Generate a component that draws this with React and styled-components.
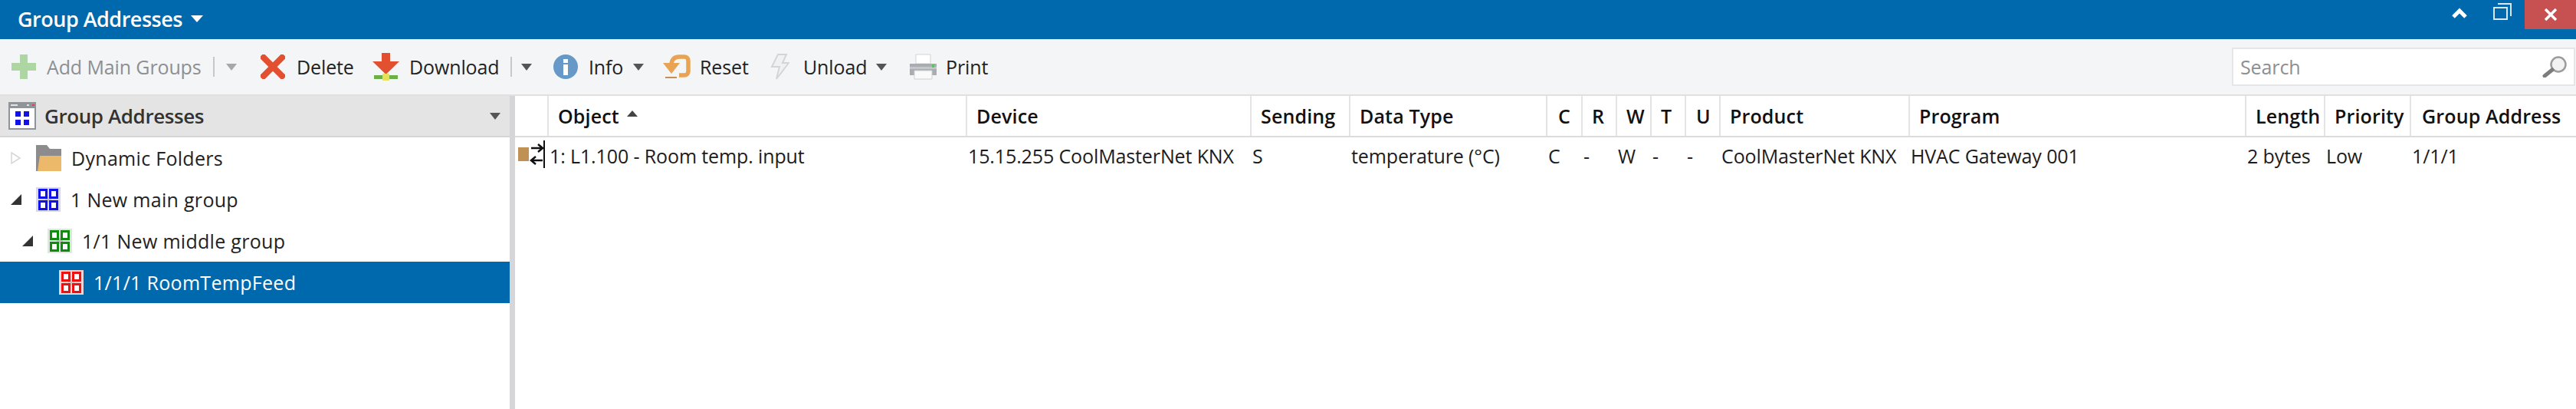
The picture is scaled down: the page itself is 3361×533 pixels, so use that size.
import React from "react";
import styled, { createGlobalStyle } from "styled-components";

const columns = "44px 546px 371px 129px 257px 46px 45px 45px 45px 45px 247px 439px 103px 112px 215px";

const GlobalStyle = createGlobalStyle`
  html, body {
    margin: 0;
    padding: 0;
    background: #ffffff;
  }
  * {
    box-sizing: border-box;
  }
`;

const Page = styled.div`
  width: 3361px;
  height: 533px;
  overflow: hidden;
  display: flex;
  flex-direction: column;
  font-family: "Open Sans", "Noto Sans", sans-serif;
  font-size: 25px;
  letter-spacing: -0.12px;
  color: #222222;
`;

const TitleBar = styled.div`
  height: 51px;
  flex: none;
  background: #0069ae;
  color: #ffffff;
  display: flex;
  align-items: flex-start;
`;

const Title = styled.div`
  margin-left: 23px;
  height: 49px;
  line-height: 49px;
  font-size: 27px;
  font-weight: 600;
  letter-spacing: -0.5px;
`;

const TitleArrow = styled.div`
  margin: 20px 0 0 11px;
  width: 0;
  height: 0;
  border-left: 8px solid transparent;
  border-right: 8px solid transparent;
  border-top: 9px solid #ffffff;
`;

const WindowControls = styled.div`
  margin-left: auto;
  display: flex;
  align-items: flex-start;
`;

const WindowIcon = styled.svg`
  display: block;
  margin-right: ${(p) => p.$right}px;
  margin-top: ${(p) => p.$top}px;
`;

const CloseButton = styled.div`
  width: 67px;
  height: 38px;
  background: #c75050;
  display: flex;
  align-items: center;
  justify-content: center;
`;

const Toolbar = styled.div`
  height: 74px;
  flex: none;
  background: #f4f5f7;
  border-bottom: 2px solid #e0e0e0;
  padding-left: 15px;
  display: flex;
  align-items: center;
`;

const ToolButton = styled.div`
  width: ${(p) => p.$width}px;
  flex: none;
  display: flex;
  align-items: center;
  white-space: nowrap;
  color: ${(p) => (p.$disabled ? "#8c8f93" : "#222222")};
`;

const ToolLabel = styled.span`
  margin-left: ${(p) => p.$gap}px;
  line-height: 32px;
`;

const ToolIcon = styled.svg`
  display: block;
  flex: none;
`;

const Separator = styled.div`
  width: 2px;
  height: 26px;
  flex: none;
  background: #c6c8ca;
`;

const MenuArrow = styled.div`
  flex: none;
  width: 0;
  height: 0;
  margin-left: ${(p) => p.$left || 0}px;
  border-left: 7px solid transparent;
  border-right: 7px solid transparent;
  border-top: 9px solid ${(p) => (p.$light ? "#a5a7aa" : "#555555")};
`;

const SearchBox = styled.div`
  margin-left: auto;
  margin-right: 1px;
  width: 448px;
  height: 50px;
  background: #ffffff;
  border: 2px solid #e4e6e8;
  display: flex;
  align-items: center;
  padding: 0 8px 0 9px;
  justify-content: space-between;
  color: #8c8f93;
`;

const Body = styled.div`
  flex: 1;
  display: flex;
  min-height: 0;
`;

const TreePanel = styled.div`
  width: 665px;
  flex: none;
  display: flex;
  flex-direction: column;
`;

const PanelHeader = styled.div`
  height: 54px;
  flex: none;
  background: #e4e4e4;
  border-bottom: 2px solid #d4d4d4;
  display: flex;
  align-items: center;
  padding: 0 12px 0 11px;
  color: #333333;
  font-size: 26px;
  letter-spacing: -0.4px;
  font-weight: 600;
`;

const PanelTitle = styled.span`
  margin-left: 11px;
  flex: 1;
`;

const TreeRow = styled.div`
  height: 54px;
  display: flex;
  align-items: center;
  padding-left: ${(p) => 14 + p.$level * 15}px;
  background: ${(p) => (p.$selected ? "#0069ae" : "transparent")};
  color: ${(p) => (p.$selected ? "#ffffff" : "#222222")};
  letter-spacing: 0.3px;
`;

const Twisty = styled.svg`
  display: block;
  flex: none;
  width: 14px;
  height: 16px;
  margin-right: 19px;
`;

const TwistySpace = styled.div`
  width: 33px;
  flex: none;
`;

const TreeLabel = styled.span`
  margin-left: 13px;
  white-space: nowrap;
`;

const Splitter = styled.div`
  width: 7px;
  flex: none;
  background: #d6d6da;
`;

const Grid = styled.div`
  flex: 1;
  min-width: 0;
`;

const HeaderRow = styled.div`
  display: grid;
  grid-template-columns: ${columns};
  height: 54px;
  border-bottom: 2px solid #dcdcdc;
`;

const HeaderCell = styled.div`
  border-right: 2px solid #e4e4e4;
  padding-left: ${(p) => p.$pad ?? 12}px;
  display: flex;
  align-items: center;
  font-weight: 600;
  letter-spacing: 0.15px;
  color: #111111;
  white-space: nowrap;
  &:last-child {
    border-right: none;
  }
`;

const SortArrow = styled.div`
  margin: 0 0 6px 10px;
  width: 0;
  height: 0;
  border-left: 7px solid transparent;
  border-right: 7px solid transparent;
  border-bottom: 8px solid #444444;
`;

const DataRow = styled.div`
  display: grid;
  grid-template-columns: ${columns};
  height: 48px;
`;

const DataCell = styled.div`
  padding-left: 1px;
  display: flex;
  align-items: center;
  white-space: nowrap;
  overflow: hidden;
  color: #1c1c1c;
`;

const GutterCell = styled.div`
  display: flex;
  align-items: center;
  padding: 0 0 4px 4px;
`;

const Plus = () => (
  <ToolIcon width="32" height="32" viewBox="0 0 32 32">
    <path d="M11 0h10v11h11v10H21v11H11V21H0V11h11z" fill="#aed6a3" />
  </ToolIcon>
);

const Cross = () => (
  <ToolIcon width="32" height="32" viewBox="0 0 32 32">
    <path d="M4 4l24 24M28 4L4 28" stroke="#e25030" strokeWidth="8" strokeLinecap="square" />
  </ToolIcon>
);

const DownloadIcon = () => (
  <ToolIcon width="35" height="36" viewBox="0 0 35 36">
    <path d="M12 0h11v11h12L17.5 28 0 11h12z" fill="#e25030" />
    <path d="M2 29h31v5H2z" fill="#6cb04a" />
    <path d="M13 27h9v9h-9z" fill="#e8e05a" />
  </ToolIcon>
);

const InfoIcon = () => (
  <ToolIcon width="32" height="32" viewBox="0 0 32 32">
    <circle cx="16" cy="16" r="16" fill="#6699c8" />
    <path d="M13 6h6v5h-6zM13 13h6v14h-6z" fill="#ffffff" />
  </ToolIcon>
);

const ResetIcon = () => (
  <ToolIcon width="36" height="32" viewBox="0 0 36 32">
    <path d="M11 12C12 6 15 3 21 3h7c3 0 5 2 5 5v14c0 3-2 5-5 5h-7" fill="none" stroke="#e8a454" strokeWidth="5.5" />
    <path d="M0 11h22L11 25z" fill="#e8a454" />
    <path d="M3 29h15v2H3z" fill="#c79050" />
  </ToolIcon>
);

const UnloadIcon = () => (
  <ToolIcon width="25" height="34" viewBox="0 0 25 34">
    <path d="M10 1h11l-5 11h8L8 33l4-16H2z" fill="#f0f1f2" stroke="#d4d5d7" strokeWidth="2" />
  </ToolIcon>
);

const PrintIcon = () => (
  <ToolIcon width="35" height="34" viewBox="0 0 35 34">
    <path d="M8 1h19v12H8z" fill="#ffffff" stroke="#d2d3d5" />
    <path d="M0 13h35v15H0z" fill="#a9adb1" />
    <path d="M0 17h35v3H0z" fill="#c4c7ca" />
    <path d="M29 14h3v4h-3z" fill="#5ec267" />
    <path d="M6 22h23v11H6z" fill="#fafafa" stroke="#cfd0d2" />
  </ToolIcon>
);

const SearchIcon = () => (
  <ToolIcon width="33" height="28" viewBox="0 0 33 28">
    <circle cx="21" cy="11" r="9.5" fill="#f2f2f2" stroke="#9c9c9c" strokeWidth="2.5" />
    <path d="M13 18L3 26" stroke="#7d7d7d" strokeWidth="5" strokeLinecap="round" />
  </ToolIcon>
);

const PanelIcon = () => (
  <ToolIcon width="36" height="36" viewBox="0 0 36 36">
    <path d="M0 0h36v36H0z" fill="#8f949b" />
    <path d="M2 8h32v26H2z" fill="#ffffff" />
    <path d="M3 3h9v2H3zM24 3h3v2h-3z" fill="#e4e4e4" />
    <path d="M31 3h3v2h-3z" fill="#d04a4a" />
    <path d="M9 12h7v7H9zM20 12h7v7h-7zM9 23h7v7H9zM20 23h7v7h-7z" fill="#1212e8" />
  </ToolIcon>
);

const GroupIcon = ({ color, fill }) => (
  <ToolIcon width="32" height="32" viewBox="0 0 32 32">
    <path d="M0 0h32v32H0z" fill={fill} />
    <path d="M14 12h4v8h-4zM12 14h8v4h-8z" fill="#c4c4c4" />
    <path
      d="M4.5 3.5h9v10h-9zM18.5 3.5h9v10h-9zM4.5 18.5h9v10h-9zM18.5 18.5h9v10h-9z"
      fill="#ffffff"
      stroke={color}
      strokeWidth="3"
    />
  </ToolIcon>
);

const FolderIcon = () => (
  <ToolIcon width="33" height="34" viewBox="0 0 33 34">
    <path d="M0 0h14l4 5h15v29H0z" fill="#8c8c8c" />
    <path d="M5 14h28v20H2z" fill="#ecb96a" />
  </ToolIcon>
);

const ConnectorIcon = () => (
  <ToolIcon width="36" height="36" viewBox="0 0 36 36">
    <path d="M0 9h14v18H0z" fill="#bf9155" />
    <path d="M17 10h14M26 5l6 5-6 5M32 26H18M23 21l-6 5 6 5" fill="none" stroke="#111111" strokeWidth="2.5" />
    <path d="M33 0h2v36h-2z" fill="#111111" />
  </ToolIcon>
);

const headers = [
  ["Object"], ["Device"], ["Sending"], ["Data Type"], ["C", 14], ["R", 12], ["W", 12], ["T", 12], ["U", 13],
  ["Product"], ["Program"], ["Length"], ["Priority"], ["Group Address", 14],
];

const cells = [
  "1: L1.100 - Room temp. input", "15.15.255 CoolMasterNet KNX", "S", "temperature (°C)", "C", "-", "W", "-", "-",
  "CoolMasterNet KNX", "HVAC Gateway 001", "2 bytes", "Low", "1/1/1",
];

const App = () => (
  <Page>
    <GlobalStyle />
    <TitleBar>
      <Title>Group Addresses</Title>
      <TitleArrow />
      <WindowControls>
        <WindowIcon $right={34} $top={10} width="20" height="15" viewBox="0 0 20 15">
          <path d="M2 12l8-8 8 8" fill="none" stroke="#ffffff" strokeWidth="5" />
        </WindowIcon>
        <WindowIcon $right={17} $top={4} width="24" height="22" viewBox="0 0 24 22">
          <path d="M6 1h17v16M1 6h17v15H1z" fill="none" stroke="#d7e8f4" strokeWidth="2" />
        </WindowIcon>
        <CloseButton>
          <svg width="18" height="16" viewBox="0 0 18 16">
            <path d="M2 1l14 14M16 1L2 15" stroke="#ffffff" strokeWidth="3.5" />
          </svg>
        </CloseButton>
      </WindowControls>
    </TitleBar>

    <Toolbar>
      <ToolButton $width={263} $disabled>
        <Plus />
        <ToolLabel $gap={14}>Add Main Groups</ToolLabel>
      </ToolButton>
      <ToolButton $width={62}>
        <Separator />
        <MenuArrow $left={15} $light />
      </ToolButton>
      <ToolButton $width={146}>
        <Cross />
        <ToolLabel $gap={15}>Delete</ToolLabel>
      </ToolButton>
      <ToolButton $width={180}>
        <DownloadIcon />
        <ToolLabel $gap={13}>Download</ToolLabel>
      </ToolButton>
      <ToolButton $width={56}>
        <Separator />
        <MenuArrow $left={12} />
      </ToolButton>
      <ToolButton $width={143}>
        <InfoIcon />
        <ToolLabel $gap={14}>Info</ToolLabel>
        <MenuArrow $left={13} />
      </ToolButton>
      <ToolButton $width={140}>
        <ResetIcon />
        <ToolLabel $gap={12}>Reset</ToolLabel>
      </ToolButton>
      <ToolButton $width={182}>
        <UnloadIcon />
        <ToolLabel $gap={18}>Unload</ToolLabel>
        <MenuArrow $left={12} />
      </ToolButton>
      <ToolButton $width={110}>
        <PrintIcon />
        <ToolLabel $gap={12}>Print</ToolLabel>
      </ToolButton>
      <SearchBox>
        <span>Search</span>
        <SearchIcon />
      </SearchBox>
    </Toolbar>

    <Body>
      <TreePanel>
        <PanelHeader>
          <PanelIcon />
          <PanelTitle>Group Addresses</PanelTitle>
          <MenuArrow />
        </PanelHeader>
        <TreeRow $level={0}>
          <Twisty viewBox="0 0 14 16">
            <path d="M1 1l11 7-11 7z" fill="#ffffff" stroke="#d6d6d6" strokeWidth="1.5" />
          </Twisty>
          <FolderIcon />
          <TreeLabel>Dynamic Folders</TreeLabel>
        </TreeRow>
        <TreeRow $level={0}>
          <Twisty viewBox="0 0 14 16">
            <path d="M14 1v14H0z" fill="#333333" />
          </Twisty>
          <GroupIcon color="#1212e8" fill="#d8d8ec" />
          <TreeLabel>1 New main group</TreeLabel>
        </TreeRow>
        <TreeRow $level={1}>
          <Twisty viewBox="0 0 14 16">
            <path d="M14 1v14H0z" fill="#333333" />
          </Twisty>
          <GroupIcon color="#128a12" fill="#dce8dc" />
          <TreeLabel>1/1 New middle group</TreeLabel>
        </TreeRow>
        <TreeRow $level={2} $selected>
          <TwistySpace />
          <GroupIcon color="#ee1111" fill="#e8d4d4" />
          <TreeLabel>1/1/1 RoomTempFeed</TreeLabel>
        </TreeRow>
      </TreePanel>
      <Splitter />
      <Grid>
        <HeaderRow>
          <HeaderCell $pad={0} />
          {headers.map(([label, pad]) => (
            <HeaderCell key={label} $pad={pad}>
              {label}
              {label === "Object" && <SortArrow />}
            </HeaderCell>
          ))}
        </HeaderRow>
        <DataRow>
          <GutterCell>
            <ConnectorIcon />
          </GutterCell>
          {cells.map((text, i) => (
            <DataCell key={i}>{text}</DataCell>
          ))}
        </DataRow>
      </Grid>
    </Body>
  </Page>
);

export default App;
